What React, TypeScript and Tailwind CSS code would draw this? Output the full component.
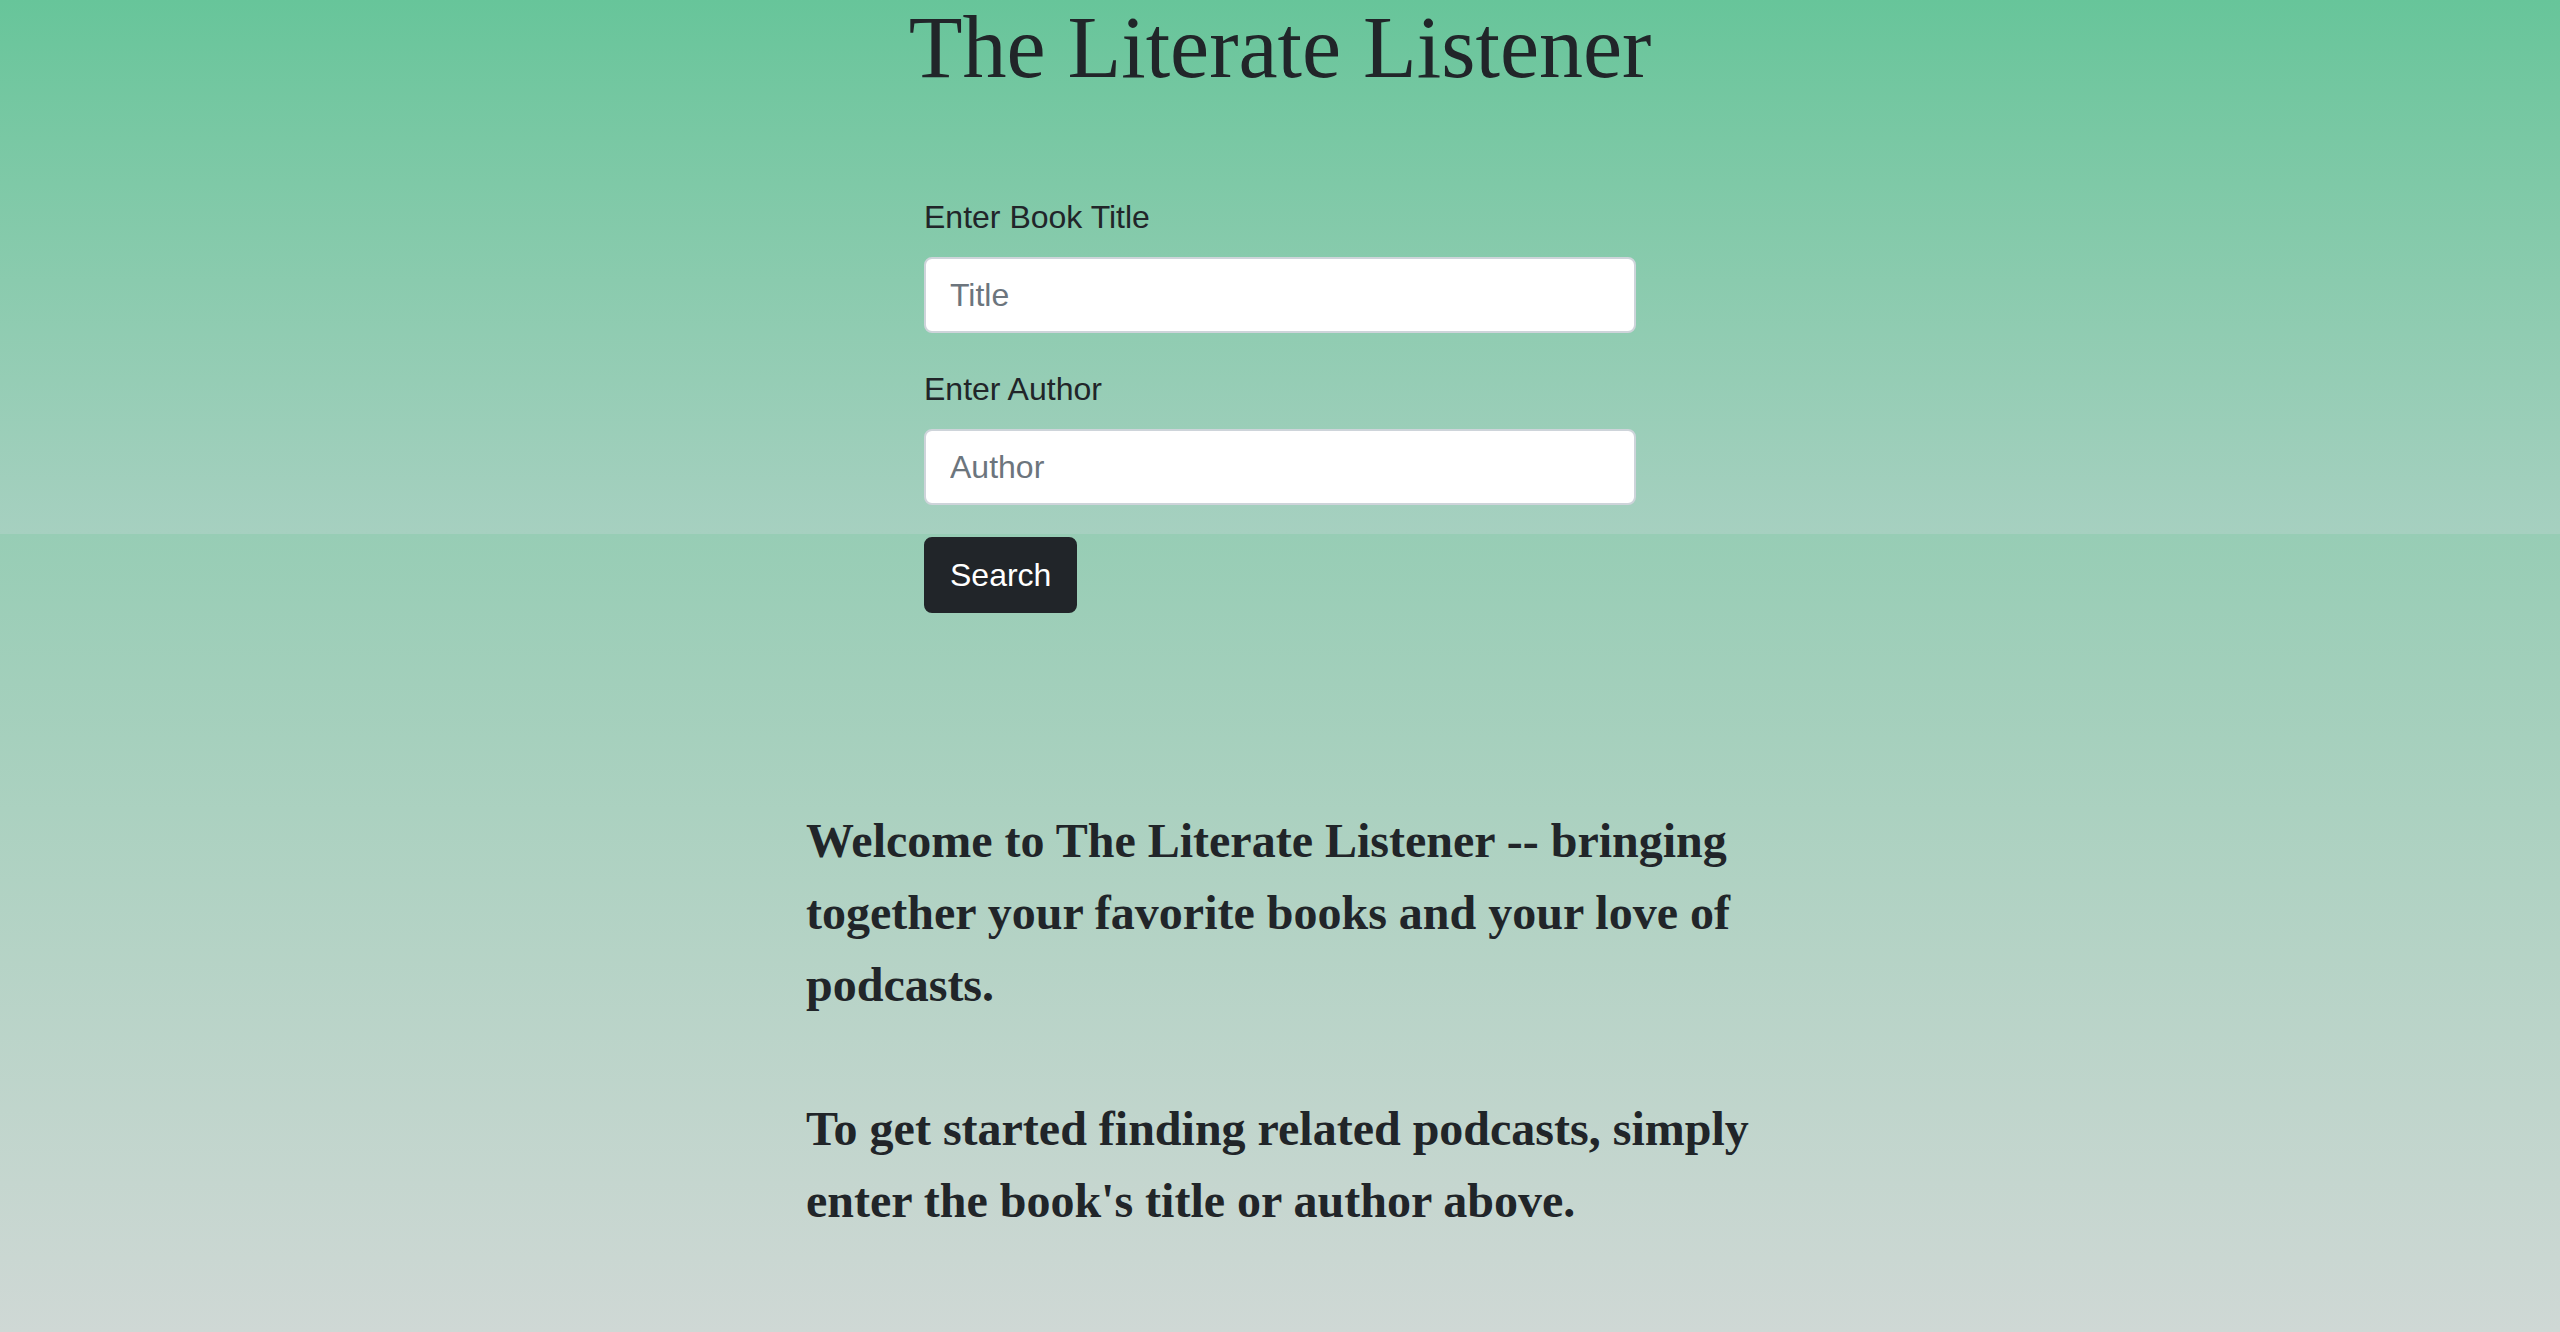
type FieldProps = {
  label: string
  placeholder: string
  className?: string
}

function Field({ label, placeholder, className }: FieldProps) {
  return (
    <div className={className}>
      <label className="mb-[16px] block text-[32px] leading-[48px]">{label}</label>
      <input
        type="text"
        placeholder={placeholder}
        className="block h-[76px] w-full rounded-[8px] border-2 border-[#ced4da] bg-white px-[24px] text-[32px] leading-[48px] text-[#495057] outline-none placeholder:text-[#6c757d]"
      />
    </div>
  )
}

export default function App() {
  return (
    <div className="flex min-h-screen flex-col text-[#212529]">

      {/* HEADER + FORM */}
      <section className="h-[534px] bg-linear-to-b from-[#67c59a] to-[#a6d0c0]">
        <h1 className="pt-[4px] text-center font-['Liberation_Serif',serif] text-[88px] leading-[88px] font-normal">
          The Literate Listener
        </h1>

        <form className="mx-auto mt-[101px] w-[712px] font-['Liberation_Sans',Arial,sans-serif]">
          <Field label="Enter Book Title" placeholder="Title" className="mb-[32px]" />
          <Field label="Enter Author" placeholder="Author" />
        </form>
      </section>

      {/* LOWER */}
      <section className="flex-1 bg-linear-to-b from-[#97cdb5] to-[#cfd8d5]">
        <div className="mx-auto mt-[3px] w-[712px] font-['Liberation_Sans',Arial,sans-serif]">
          <button
            type="button"
            className="rounded-[8px] border-2 border-[#212529] bg-[#212529] px-[24px] py-[12px] text-[32px] leading-[48px] text-white"
          >
            Search
          </button>
        </div>

        <div className="mx-auto mt-[192px] w-[1000px] pl-[26px] font-['Liberation_Serif',serif] text-[48px] leading-[72px] font-bold">
          <p>
            Welcome to The Literate Listener -- bringing together your favorite books and your love of podcasts.
          </p>
          <p className="mt-[72px]">
            To get started finding related podcasts, simply enter the book's title or author above.
          </p>
        </div>
      </section>

    </div>
  )
}
